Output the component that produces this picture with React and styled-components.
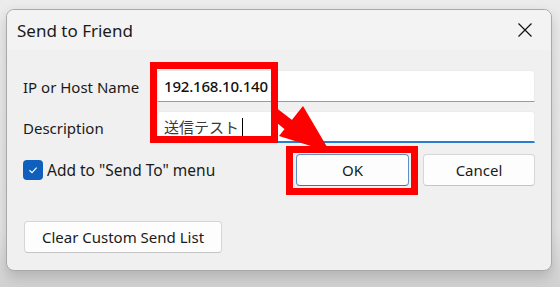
import React from 'react';
import styled, { createGlobalStyle } from 'styled-components';

const GlobalStyle = createGlobalStyle`
  html, body {
    margin: 0;
    padding: 0;
    background: linear-gradient(#ececec 0%, #e6e6e6 80%, #d2d2d2 100%);
    font-family: "Noto Sans", "Noto Sans CJK JP", sans-serif;
  }
`;

const Stage = styled.div`
  position: relative;
  width: 560px;
  height: 287px;
  padding: 9px 8px 0 6px;
  box-sizing: border-box;
`;

const Dialog = styled.div`
  width: 546px;
  height: 262px;
  box-sizing: border-box;
  border: 1px solid #a9a9a9;
  border-radius: 8px;
  background: #f0f0f0;
  box-shadow: 0 6px 14px rgba(0, 0, 0, 0.18);
  overflow: hidden;
  display: flex;
  flex-direction: column;
`;

const TitleBar = styled.div`
  height: 40px;
  display: flex;
  align-items: center;
  justify-content: space-between;
  padding: 0 18px 0 10px;
  background: #f3f3f3;
  font-size: 17px;
  color: #1a1a1a;
`;

const CloseButton = styled.div`
  width: 16px;
  height: 16px;
  display: flex;
  margin-top: -1px;
`;

const Body = styled.div`
  flex: 1;
  padding: 20px 16px 0 16px;
  display: flex;
  flex-direction: column;
`;

const FieldGrid = styled.div`
  display: grid;
  grid-template-columns: 134px 1fr;
  row-gap: 9px;
  align-items: center;
`;

const Label = styled.div`
  font-size: 15px;
  color: #1a1a1a;
  padding-top: 2px;
`;

const Input = styled.div`
  height: 32px;
  box-sizing: border-box;
  background: #ffffff;
  border: 1px solid #ececec;
  border-bottom: ${(p) => (p.focused ? '2px solid #2b7bd0' : '1px solid #9c9c9c')};
  border-radius: 3px 3px 0 0;
  padding: 0 6px;
  display: flex;
  align-items: center;
  font-size: 15px;
  letter-spacing: ${(p) => (p.focused ? '0' : '-0.2px')};
  color: ${(p) => (p.focused ? '#3a3a3a' : '#111')};
  font-weight: ${(p) => (p.focused ? 400 : 500)};
`;

const Caret = styled.span`
  display: inline-block;
  width: 1px;
  height: 18px;
  background: #000;
  margin-left: 3px;
`;

const ActionRow = styled.div`
  margin-top: 11px;
  display: flex;
  align-items: center;
  justify-content: space-between;
`;

const CheckLabel = styled.div`
  display: flex;
  align-items: center;
  gap: 4px;
  font-size: 15.5px;
  color: #1a1a1a;
`;

const CheckBox = styled.div`
  width: 20px;
  height: 20px;
  border-radius: 4px;
  background: #0f5fbd;
  display: flex;
  align-items: center;
  justify-content: center;
`;

const ButtonGroup = styled.div`
  display: flex;
  gap: 14px;
`;

const Button = styled.div`
  width: ${(p) => p.width}px;
  height: 32px;
  box-sizing: border-box;
  background: #fdfdfd;
  border: 1px solid ${(p) => (p.primary ? '#5f8fc4' : '#d6d6d6')};
  border-bottom-color: ${(p) => (p.primary ? '#3d74b6' : '#c4c4c4')};
  border-radius: 4px;
  display: flex;
  align-items: center;
  justify-content: center;
  font-size: 15px;
  color: #1a1a1a;
`;

const ClearRow = styled.div`
  margin-top: 35px;
  padding-left: 1px;
`;

const RedFrame = styled.div`
  position: absolute;
  box-sizing: border-box;
  border: 7px solid #ff0000;
  left: ${(p) => p.x}px;
  top: ${(p) => p.y}px;
  width: ${(p) => p.w}px;
  height: ${(p) => p.h}px;
`;

const Arrow = styled.svg`
  position: absolute;
  left: 0;
  top: 0;
`;

export default function App() {
  return (
    <>
      <GlobalStyle />
      <Stage>
        <Dialog>
          <TitleBar>
            <span>Send to Friend</span>
            <CloseButton>
              <svg width="16" height="16" viewBox="0 0 16 16">
                <path d="M1.5 1.5 L14.5 14.5 M14.5 1.5 L1.5 14.5" stroke="#111" strokeWidth="1.2" fill="none" />
              </svg>
            </CloseButton>
          </TitleBar>
          <Body>
            <FieldGrid>
              <Label>IP or Host Name</Label>
              <Input>192.168.10.140</Input>
              <Label>Description</Label>
              <Input focused>
                送信テスト<Caret />
              </Input>
            </FieldGrid>
            <ActionRow>
              <CheckLabel>
                <CheckBox>
                  <svg width="12" height="12" viewBox="0 0 12 12">
                    <path d="M2.5 6.2 L5 8.6 L9.6 3.6" stroke="#fff" strokeWidth="1.2" fill="none" />
                  </svg>
                </CheckBox>
                Add to "Send To" menu
              </CheckLabel>
              <ButtonGroup>
                <Button primary width={113}>OK</Button>
                <Button width={112}>Cancel</Button>
              </ButtonGroup>
            </ActionRow>
            <ClearRow>
              <Button width={198}>Clear Custom Send List</Button>
            </ClearRow>
          </Body>
        </Dialog>
        <RedFrame x={150} y={62} w={128} h={81} />
        <RedFrame x={286} y={146} w={132} h={49} />
        <Arrow width="560" height="287">
          <polygon points="271,104 279,110 296,123 288,132 271,118" fill="#ff0000" />
          <polygon points="303,106 279,136 330,152" fill="#ff0000" />
        </Arrow>
      </Stage>
    </>
  );
}
